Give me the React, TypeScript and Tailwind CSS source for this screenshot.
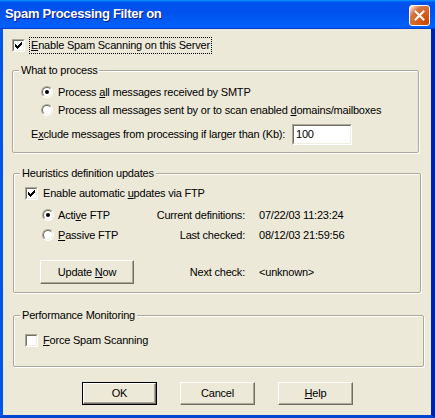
import React from 'react';

const CheckMark = () => (
  <svg width="9" height="9" viewBox="0 0 9 9" shapeRendering="crispEdges">
    <rect x="1" y="3" width="1" height="3" fill="#000" />
    <rect x="2" y="4" width="1" height="3" fill="#000" />
    <rect x="3" y="5" width="1" height="3" fill="#000" />
    <rect x="4" y="4" width="1" height="3" fill="#000" />
    <rect x="5" y="3" width="1" height="3" fill="#000" />
    <rect x="6" y="2" width="1" height="3" fill="#000" />
    <rect x="7" y="1" width="1" height="3" fill="#000" />
  </svg>
);

const CheckBox = ({ checked }: { checked?: boolean }) => (
  <span className="flex w-[13px] h-[13px] shrink-0 border border-t-[#ACA899] border-l-[#ACA899] border-b-white border-r-white">
    <span className="flex w-full h-full bg-white border border-t-[#716F64] border-l-[#716F64] border-b-[#F1EFE2] border-r-[#F1EFE2]">
      {checked && <CheckMark />}
    </span>
  </span>
);

const Radio = ({ checked }: { checked?: boolean }) => (
  <span className="flex w-[12px] h-[12px] shrink-0 rounded-full border border-t-[#ACA899] border-l-[#ACA899] border-b-white border-r-white">
    <span className="flex w-full h-full items-center justify-center rounded-full bg-white border border-t-[#716F64] border-l-[#716F64] border-b-[#F1EFE2] border-r-[#F1EFE2]">
      {checked && <span className="w-[4px] h-[4px] rounded-full bg-black" />}
    </span>
  </span>
);

const Group = ({ label, className, children }: { label: string; className: string; children: React.ReactNode }) => (
  <div className={`relative shrink-0 rounded-[2px] border border-[#ACA899] shadow-[inset_1px_1px_0_#fff,1px_1px_0_#fff] ${className}`}>
    <span className="absolute left-[6px] -top-[8px] bg-[#ECE9D8] px-[2px] leading-[14px] whitespace-nowrap">{label}</span>
    {children}
  </div>
);

const Button = ({ children, isDefault, className }: { children: React.ReactNode; isDefault?: boolean; className: string }) =>
  isDefault ? (
    <div className={`flex border border-black ${className}`}>
      <div className="flex-1 flex items-center justify-center border border-t-white border-l-white border-b-[#716F64] border-r-[#716F64] shadow-[inset_-1px_-1px_0_#ACA899]">
        {children}
      </div>
    </div>
  ) : (
    <div className={`flex items-center justify-center border border-t-white border-l-white border-b-[#716F64] border-r-[#716F64] shadow-[inset_-1px_-1px_0_#ACA899] ${className}`}>
      {children}
    </div>
  );

const InfoRow = ({ left, label, value, className }: { left: React.ReactNode; label: string; value: string; className: string }) => (
  <div className={`flex items-center ${className}`}>
    <div className="w-[203px] flex items-center">
      {left}
      <span className="ml-auto">{label}</span>
    </div>
    <span className="ml-[14px]">{value}</span>
  </div>
);

export default function App() {
  return (
    <div className="w-[435px] h-[418px] flex flex-col font-['Tahoma','Liberation_Sans',Arial,sans-serif] text-[11px] leading-[13px] tracking-[-0.2px] text-black select-none whitespace-nowrap">
      {/* title bar */}
      <div className="h-[29px] shrink-0 flex items-start justify-between bg-[linear-gradient(180deg,#0997ff,#0053ee_8%,#0050ee_40%,#0060f8_88%,#0060f8_93%,#005bff_95%,#003dd7_96%,#003dd7)]">
        <span className="ml-[5px] mt-[6px] text-[13px] leading-[16px] tracking-[-0.3px] font-bold text-white [text-shadow:1px_1px_0_#0f1f8c]">
          Spam Processing Filter on
        </span>
        <div className="mt-[5px] mr-[5px] w-[21px] h-[21px] flex items-center justify-center rounded-[3px] border border-white bg-[radial-gradient(circle_at_90%_90%,#cc4600_0%,#dc6527_55%,#cd7546_70%,#ffccb2_90%,#fff_100%)]">
          <svg width="11" height="11" viewBox="0 0 11 11">
            <path d="M1.5 1.5 L9.5 9.5 M9.5 1.5 L1.5 9.5" stroke="#fff" strokeWidth="2" strokeLinecap="square" />
          </svg>
        </div>
      </div>

      {/* body */}
      <div className="flex-1 flex flex-col bg-[#ECE9D8] border-l-[3px] border-r-[4px] border-b-[3px] border-l-[#0055EA] border-r-[#0022A8] border-b-[#0045D0] pl-[9px]">
        <div className="mt-[8px] h-[17px] flex items-center">
          <CheckBox checked />
          <span className="ml-[4px] h-[17px] px-[1px] flex items-center border border-dotted border-black">
            <span><u>E</u>nable Spam Scanning on this Server</span>
          </span>
        </div>

        <Group label="What to process" className="mt-[16px] h-[83px] w-[407px]">
          <div className="pt-[12px] pl-[28px]">
            <div className="h-[18px] flex items-center">
              <Radio checked />
              <span className="ml-[5px]">Process <u>a</u>ll messages received by SMTP</span>
            </div>
            <div className="h-[18px] flex items-center">
              <Radio />
              <span className="ml-[5px]">Process all messages sent by or to scan enabled <u>d</u>omains/mailboxes</span>
            </div>
          </div>
          <div className="mt-[5px] h-[21px] flex items-center pl-[18px]">
            <span className="w-[261px]">E<u>x</u>clude messages from processing if larger than (Kb):</span>
            <div className="w-[60px] h-[21px] border border-t-[#ACA899] border-l-[#ACA899] border-b-white border-r-white">
              <div className="w-full h-full flex items-center pl-[2px] bg-white border border-t-[#716F64] border-l-[#716F64] border-b-[#F1EFE2] border-r-[#F1EFE2]">
                100
              </div>
            </div>
          </div>
        </Group>

        <Group label="Heuristics definition updates" className="mt-[20px] ml-[1px] h-[120px] w-[408px]">
          <div className="pt-[10px] pl-[11px] h-[28px] flex items-center">
            <CheckBox checked />
            <span className="ml-[5px]">Enable automatic <u>u</u>pdates via FTP</span>
          </div>
          <div className="pl-[28px] mt-[3px]">
            <InfoRow
              className="h-[20px]"
              left={
                <>
                  <Radio checked />
                  <span className="ml-[4px]">
                    Acti<u>v</u>e FTP
                  </span>
                </>
              }
              label="Current definitions:"
              value="07/22/03 11:23:24"
            />
            <InfoRow
              className="h-[20px]"
              left={
                <>
                  <Radio />
                  <span className="ml-[4px]">
                    <u>P</u>assive FTP
                  </span>
                </>
              }
              label="Last checked:"
              value="08/12/03 21:59:56"
            />
          </div>
          <div className="mt-[15px] pl-[26px] h-[24px] flex items-center">
            <div className="w-[205px] flex items-center">
              <Button className="w-[94px] h-[24px]">
                <span>
                  Update <u>N</u>ow
                </span>
              </Button>
              <span className="ml-auto">Next check:</span>
            </div>
            <span className="ml-[14px]">&lt;unknown&gt;</span>
          </div>
        </Group>

        <Group label="Performance Monitoring" className="mt-[22px] ml-[1px] h-[52px] w-[411px]">
          <div className="pt-[15px] pl-[11px] h-[33px] flex items-center">
            <CheckBox />
            <span className="ml-[5px]">
              <u>F</u>orce Spam Scanning
            </span>
          </div>
        </Group>

        <div className="mt-[15px] ml-[70px] flex gap-[23px]">
          <Button isDefault className="w-[75px] h-[23px]">
            <span>OK</span>
          </Button>
          <Button className="w-[75px] h-[23px]">
            <span>Cancel</span>
          </Button>
          <Button className="w-[75px] h-[23px]">
            <span>
              <u>H</u>elp
            </span>
          </Button>
        </div>
      </div>
    </div>
  );
}
